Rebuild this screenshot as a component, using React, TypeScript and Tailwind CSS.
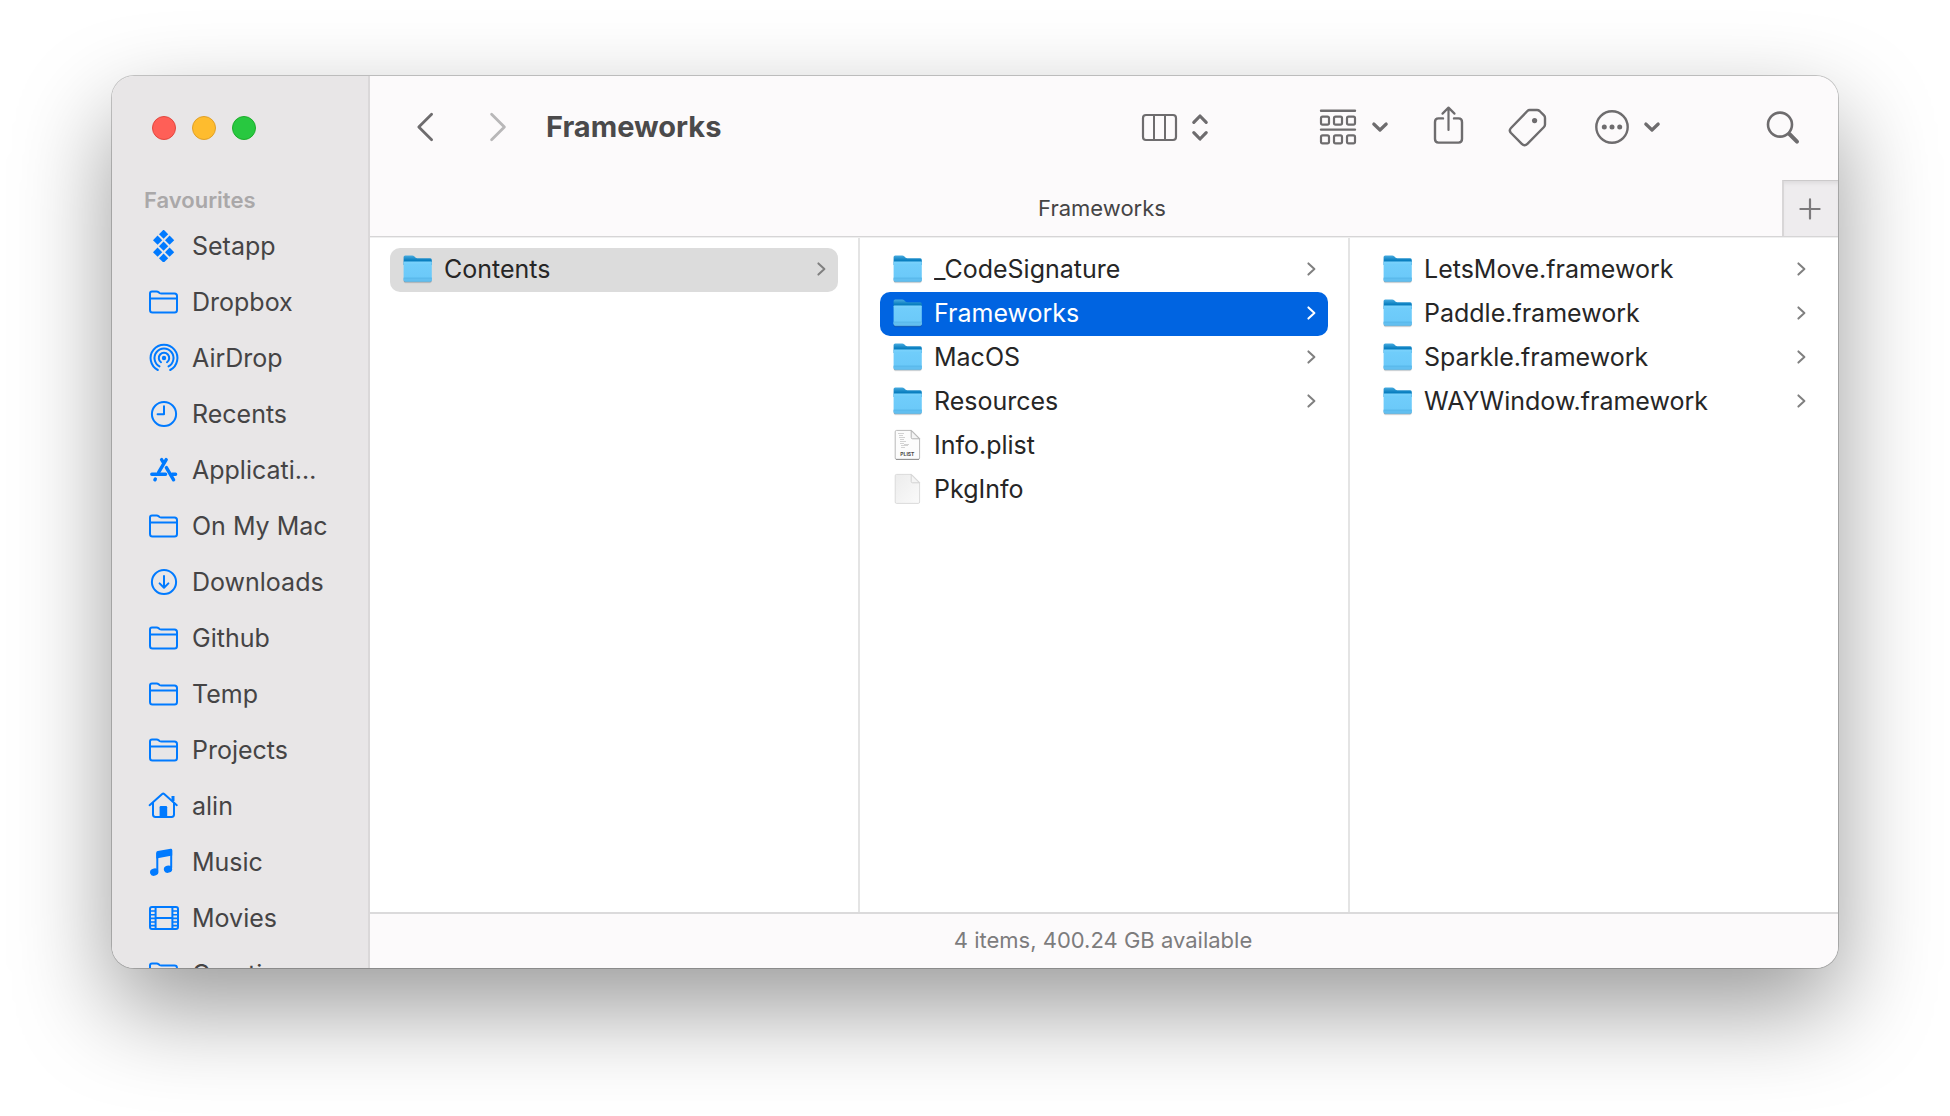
import React, { useState } from "react";
import clsx from "clsx";

type Entry = {
  name: string;
  kind: "folder" | "plist" | "file";
};

const contents: Entry[] = [{ name: "Contents", kind: "folder" }];

const bundle: Entry[] = [
  { name: "_CodeSignature", kind: "folder" },
  { name: "Frameworks", kind: "folder" },
  { name: "MacOS", kind: "folder" },
  { name: "Resources", kind: "folder" },
  { name: "Info.plist", kind: "plist" },
  { name: "PkgInfo", kind: "file" },
];

const frameworks: Entry[] = [
  { name: "LetsMove.framework", kind: "folder" },
  { name: "Paddle.framework", kind: "folder" },
  { name: "Sparkle.framework", kind: "folder" },
  { name: "WAYWindow.framework", kind: "folder" },
];

/* Sidebar icons, all on a 32x32 box */

const SideIcon = ({ children }: { children: React.ReactNode }) => (
  <svg
    viewBox="0 0 32 32"
    className="size-8 shrink-0 text-[#007aff]"
    fill="none"
    stroke="currentColor"
    strokeWidth="2"
    strokeLinecap="round"
    strokeLinejoin="round"
    aria-hidden="true"
  >
    {children}
  </svg>
);

const SetappIcon = () => (
  <SideIcon>
    <g fill="currentColor" stroke="none">
      {[
        [15.6, 4.2],
        [9.6, 10.2],
        [21.6, 10.2],
        [15.6, 16.2],
        [9.6, 22.2],
        [21.6, 22.2],
        [15.6, 28.2],
      ].map(([x, y]) => (
        <path
          key={`${x}-${y}`}
          d={`M${x} ${y - 4.6}l4.6 4.6l-4.6 4.6l-4.6 -4.6z`}
        />
      ))}
    </g>
  </SideIcon>
);

const FolderOutline = () => (
  <SideIcon>
    <path d="M2 9V7.5Q2 5.5 4 5.5H8.6Q9.8 5.5 10.7 6.3L11.5 7Q12.3 7.6 13.5 7.6H26.5Q29 7.6 29 10.1V24Q29 26.5 26.5 26.5H4.5Q2 26.5 2 24ZM2 12.4H29" />
  </SideIcon>
);

const AirDropIcon = () => (
  <SideIcon>
    <circle cx="16" cy="16" r="2.2" fill="currentColor" stroke="none" />
    <path d="M13 20.2A5.2 5.2 0 1 1 19 20.2" />
    <path d="M11.5 24.4A9.5 9.5 0 1 1 20.5 24.4" />
    <path d="M9.8 28A13.4 13.4 0 1 1 22.2 28" />
  </SideIcon>
);

const RecentsIcon = () => (
  <SideIcon>
    <circle cx="16" cy="16" r="12.1" />
    <path d="M16 8.2V16.3H9.6" />
  </SideIcon>
);

const ApplicationsIcon = () => (
  <SideIcon>
    <g strokeWidth="3.4">
      <path d="M18.2 5.6L10.6 18.4M13.6 5.6L15.8 9.2" />
      <path d="M3.8 20.2H17.6M24.2 20.2H27.6" />
      <path d="M18.4 13.6L25.6 25.8M7.3 25.1L6.9 25.8" />
    </g>
  </SideIcon>
);

const DownloadsIcon = () => (
  <SideIcon>
    <circle cx="16" cy="16" r="12.1" />
    <path d="M16 10V21.6M11.6 17.4L16 21.8L20.4 17.4" />
  </SideIcon>
);

const HomeIcon = () => (
  <SideIcon>
    <path d="M1.6 15.2L14.2 4Q15.2 3.2 16.2 4L28.8 15.2" />
    <path d="M5 13V24.5Q5 26.9 7.4 26.9H23.6Q26 26.9 26 24.5V13" />
    <path d="M25 11V6" strokeWidth="3" strokeLinecap="butt" />
    <path
      d="M11.6 27V17.2Q11.6 16 12.8 16H18Q19.2 16 19.2 17.2V27Z"
      fill="currentColor"
      stroke="none"
    />
  </SideIcon>
);

const MusicIcon = () => (
  <SideIcon>
    <path d="M9.3 25V7.5M23.2 21.6V4.5" />
    <path
      d="M8.3 6.8Q8.3 5.4 9.7 5.1L22.6 2.8Q24.2 2.6 24.2 4V9.6L8.3 12.6Z"
      fill="currentColor"
      stroke="none"
    />
    <g fill="currentColor" stroke="none">
      <ellipse cx="6.2" cy="26.1" rx="4.2" ry="3.6" transform="rotate(-18 6.2 26.1)" />
      <ellipse cx="20" cy="23.2" rx="4.2" ry="3.6" transform="rotate(-18 20 23.2)" />
    </g>
  </SideIcon>
);

const MoviesIcon = () => (
  <SideIcon>
    <rect x="2" y="5" width="28" height="22" rx="2" />
    <path d="M7.6 5V27M24.4 5V27M7.6 16H24.4" />
    <path
      d="M2 9H7M2 12.8H7M2 16.4H7M2 20H7M2 23.6H7M25 9H30M25 12.8H30M25 16.4H30M25 20H30M25 23.6H30"
      strokeLinecap="butt"
      strokeWidth="1.6"
    />
  </SideIcon>
);

const favourites = [
  { name: "Setapp", Icon: SetappIcon },
  { name: "Dropbox", Icon: FolderOutline },
  { name: "AirDrop", Icon: AirDropIcon },
  { name: "Recents", Icon: RecentsIcon },
  { name: "Applications", Icon: ApplicationsIcon },
  { name: "On My Mac", Icon: FolderOutline },
  { name: "Downloads", Icon: DownloadsIcon },
  { name: "Github", Icon: FolderOutline },
  { name: "Temp", Icon: FolderOutline },
  { name: "Projects", Icon: FolderOutline },
  { name: "alin", Icon: HomeIcon },
  { name: "Music", Icon: MusicIcon },
  { name: "Movies", Icon: MoviesIcon },
  { name: "Creative", Icon: FolderOutline },
];

/* File icons */

const FolderIcon = () => (
  <svg viewBox="0 0 30 32" className="h-8 w-[30px] shrink-0" aria-hidden="true">
    <defs>
      <linearGradient id="folderBack" x1="0" y1="0" x2="0" y2="1">
        <stop offset="0" stopColor="#48ace0" />
        <stop offset="0.5" stopColor="#0a7fc0" />
      </linearGradient>
      <linearGradient id="folderFront" x1="0" y1="0" x2="0" y2="1">
        <stop offset="0" stopColor="#7dd3fc" />
        <stop offset="0.15" stopColor="#70cdfb" />
        <stop offset="1" stopColor="#6ac8f8" />
      </linearGradient>
    </defs>
    <rect x="1.6" y="26" width="28" height="4.2" rx="1.6" fill="#000" opacity="0.1" />
    <rect x="1.8" y="25" width="27.8" height="4.2" rx="1.4" fill="#5b7f93" opacity="0.7" />
    <path
      d="M1.6 4.1Q1.6 2.5 3.2 2.5H10.2Q11.4 2.5 12.2 3.3L13.4 4.5Q14.2 5.3 15.4 5.3H28.2Q29.8 5.3 29.8 6.9V12H1.6Z"
      fill="url(#folderBack)"
    />
    <path
      d="M1.6 9.3Q1.6 8.4 2.5 8.4H28.9Q29.8 8.4 29.8 9.3V26.8Q29.8 28.4 28.2 28.4H3.2Q1.6 28.4 1.6 26.8Z"
      fill="url(#folderFront)"
    />
    <path d="M1.6 25H29.8V26.8Q29.8 28.4 28.2 28.4H3.2Q1.6 28.4 1.6 26.8Z" fill="#62bff0" />
    <path d="M1.6 25H29.8" stroke="#4fb0e2" strokeWidth="0.6" />
  </svg>
);

const DocumentIcon = ({ plist = false }: { plist?: boolean }) => (
  <svg viewBox="0 0 30 32" className="h-8 w-[30px] shrink-0" aria-hidden="true">
    <defs>
      <linearGradient id="page" x1="0" y1="0" x2="1" y2="1">
        <stop offset="0" stopColor="#ececec" />
        <stop offset="1" stopColor="#fafafa" />
      </linearGradient>
    </defs>
    <path
      d="M4.6 1.4H19.6L27.6 9.4V29Q27.6 30.4 26.2 30.4H4.6Q3.2 30.4 3.2 29V2.8Q3.2 1.4 4.6 1.4Z"
      fill={plist ? "#fcfcfc" : "url(#page)"}
      stroke={plist ? "#b9b9b9" : "#dadada"}
      strokeWidth="1"
    />
    {plist && <path d="M4 30.4H27" stroke="#8f8f8f" strokeWidth="1" />}
    <path
      d="M19.2 1.6V8.4Q19.2 9.8 20.6 9.8H27.4Z"
      fill="#f4f4f4"
      stroke={plist ? "#aaaaaa" : "#cfcfcf"}
      strokeWidth="0.9"
    />
    {plist && (
      <>
        <path
          d="M6 4.5H12M7 6.5H11M7 8.5H13M8 10.5H12M8 12.5H14M8 14.5H12M9 16.5H16M9 18.5H13M12 15.5H17"
          stroke="#d2d2d2"
          strokeWidth="1"
        />
        <text
          x="15.4"
          y="27.4"
          textAnchor="middle"
          fontFamily="Inter, sans-serif"
          fontSize="5"
          fontWeight="700"
          fill="#4a4a4a"
        >
          PLIST
        </text>
      </>
    )}
  </svg>
);

/* Toolbar icons, drawn at their own size */

const ToolIcon = ({
  w,
  h,
  className,
  children,
}: {
  w: number;
  h: number;
  className?: string;
  children: React.ReactNode;
}) => (
  <svg
    width={w}
    height={h}
    viewBox={`0 0 ${w} ${h}`}
    className={clsx("shrink-0 overflow-visible", className)}
    fill="none"
    stroke="currentColor"
    strokeWidth="2"
    strokeLinecap="round"
    strokeLinejoin="round"
    aria-hidden="true"
  >
    {children}
  </svg>
);

const ChevronDown = () => (
  <ToolIcon w={16} h={10}>
    <path d="M1.8 2L8 8L14.2 2" strokeWidth="3.2" />
  </ToolIcon>
);

const Toolbar = () => (
  <div className="flex h-[104px] shrink-0 items-center pr-[39px] pb-0.5 pl-[47px] text-[#6e6c6e]">
    <button type="button" aria-label="Back">
      <ToolIcon w={16} h={28}>
        <path d="M14.6 1.2L1.8 14L14.6 26.8" strokeWidth="2.8" />
      </ToolIcon>
    </button>
    <button type="button" aria-label="Forward" className="ml-[57px] text-[#b8b7b8]">
      <ToolIcon w={16} h={28}>
        <path d="M1.6 1.2L14.4 14L1.6 26.8" strokeWidth="2.8" />
      </ToolIcon>
    </button>
    <h1 className="ml-10 flex-1 text-[29px] leading-9 font-bold text-[#4b4a4b]">
      Frameworks
    </h1>

    <button type="button" aria-label="View" className="mr-28 flex items-center gap-[15px]">
      <ToolIcon w={35} h={27}>
        <rect x="1" y="1" width="33" height="25" rx="3" strokeWidth="2.2" />
        <path d="M12 1V26M23 1V26" />
      </ToolIcon>
      <ToolIcon w={16} h={27}>
        <path d="M1.8 8.4L8 2L14.2 8.4M1.8 18.6L8 25L14.2 18.6" strokeWidth="3.2" />
      </ToolIcon>
    </button>

    <button type="button" aria-label="Group" className="mr-[46px] flex items-center gap-4">
      <ToolIcon w={36} h={36}>
        <path d="M1 1.8H35M1 20.6H35" strokeWidth="2.4" />
        {[7.6, 26.4].map((y) =>
          [1, 14, 27].map((x) => (
            <rect key={`${x}-${y}`} x={x} y={y} width="8" height="8" rx="1.6" strokeWidth="2.2" />
          ))
        )}
      </ToolIcon>
      <ChevronDown />
    </button>

    <button type="button" aria-label="Share" className="mr-[46px] -mt-1">
      <ToolIcon w={29} h={38}>
        <path d="M9 12.4H4.5Q1 12.4 1 15.9V33Q1 36.6 4.5 36.6H24.5Q28 36.6 28 33V15.9Q28 12.4 24.5 12.4H20" strokeWidth="2.4" />
        <path d="M14.5 24V2M8.5 7.6L14.5 1.6L20.5 7.6" strokeWidth="2.2" />
      </ToolIcon>
    </button>

    <button type="button" aria-label="Tags" className="mr-[49px]">
      <ToolIcon w={37} h={37}>
        <path
          d="M20.6 1H28Q29.5 1 30.6 2L35 6.4Q36 7.5 36 9V15.6Q36 17 35 18L18.4 34.8Q15.6 37.6 12.8 34.8L2 24Q-0.4 21.4 2 19L18.4 2Q19.4 1 20.6 1Z"
          strokeWidth="2.4"
        />
        <circle cx="25.6" cy="11.6" r="2.6" fill="currentColor" stroke="none" />
      </ToolIcon>
    </button>

    <button type="button" aria-label="More" className="mr-[107px] flex items-center gap-[15px]">
      <ToolIcon w={34} h={34}>
        <circle cx="17" cy="17" r="15.7" strokeWidth="2.4" />
        <g fill="currentColor" stroke="none">
          <circle cx="9.3" cy="17" r="2.5" />
          <circle cx="17" cy="17" r="2.5" />
          <circle cx="24.7" cy="17" r="2.5" />
        </g>
      </ToolIcon>
      <ChevronDown />
    </button>

    <button type="button" aria-label="Search">
      <ToolIcon w={32} h={33}>
        <circle cx="13" cy="13.6" r="12" strokeWidth="2.6" />
        <path d="M22.4 23L30 30.6" strokeWidth="4" />
      </ToolIcon>
    </button>
  </div>
);

const Sidebar = () => (
  <aside className="flex w-[258px] shrink-0 flex-col overflow-hidden border-r-2 border-[#dad8d9] bg-[#e8e6e7]">
    <div className="flex h-[104px] shrink-0 items-center gap-4 pl-10">
      <button
        type="button"
        aria-label="Close"
        className="size-6 rounded-full border border-[#e2483f] bg-[#ff5f57]"
      />
      <button
        type="button"
        aria-label="Minimise"
        className="size-6 rounded-full border border-[#e0a028] bg-[#febc2e]"
      />
      <button
        type="button"
        aria-label="Zoom"
        className="size-6 rounded-full border border-[#1dad2b] bg-[#28c840]"
      />
    </div>
    <h2 className="h-[39px] shrink-0 pl-8 text-[22px] leading-10 font-semibold text-[#aaa8a9]">
      Favourites
    </h2>
    <nav>
      <ul>
        {favourites.map(({ name, Icon }) => (
          <li key={name}>
            <a href="#" className="flex h-14 items-center gap-3 pr-10 pb-0.5 pl-9">
              <Icon />
              <span className="truncate text-[25px] leading-8 text-[#454445]">
                {name}
              </span>
            </a>
          </li>
        ))}
      </ul>
    </nav>
  </aside>
);

const Column = ({
  entries,
  selected,
  focused = false,
  onSelect,
  className,
}: {
  entries: Entry[];
  selected?: string;
  focused?: boolean;
  onSelect?: (name: string) => void;
  className?: string;
}) => (
  <ul className={clsx("min-w-0 px-5 pt-[10px]", className)}>
    {entries.map(({ name, kind }) => {
      const active = name === selected;

      return (
        <li key={name}>
          <button
            type="button"
            onClick={() => onSelect?.(name)}
            className={clsx(
              "flex h-11 w-full items-center gap-3 rounded-[10px] px-3 pb-0.5 text-left",
              active && focused && "bg-[#0064e1] text-white",
              active && !focused && "bg-[#dcdcdc] text-[#262626]",
              !active && "text-[#262626]"
            )}
          >
            {kind === "folder" ? <FolderIcon /> : <DocumentIcon plist={kind === "plist"} />}
            <span className="flex-1 truncate text-[25px] leading-8">{name}</span>
            {kind === "folder" && (
              <ToolIcon
                w={9}
                h={14}
                className={active && focused ? "text-white" : "text-[#808080]"}
              >
                <path d="M1.4 1.4L7.4 7L1.4 12.6" />
              </ToolIcon>
            )}
          </button>
        </li>
      );
    })}
  </ul>
);

const App = () => {
  const [selected, setSelected] = useState("Frameworks");

  return (
    <div className="h-screen bg-white px-28 pt-[76px] pb-[148px] font-['Inter',sans-serif]">
      <div className="flex h-full overflow-hidden rounded-[22px] bg-white shadow-[0_0_0_1px_rgba(0,0,0,0.2),0_40px_96px_rgba(0,0,0,0.4)]">
        <Sidebar />

        <main className="flex min-w-0 flex-1 flex-col">
          <header className="border-b border-[#d6d5d6] bg-[#fcfafb]">
            <Toolbar />
            <div className="flex h-14 pl-[52px]">
              <div className="flex flex-1 items-center justify-center text-[22px] leading-7 text-[#454445]">
                Frameworks
              </div>
              <button
                type="button"
                aria-label="New tab"
                className="flex w-14 items-center justify-center border-t border-l-2 border-t-[#cccacb] border-l-[#d8d6d7] bg-[#eeecee] pr-0.5 text-[#7c7a7c] shadow-[inset_0_4px_4px_-2px_rgba(0,0,0,0.08)]"
              >
                <ToolIcon w={22} h={22}>
                  <path d="M11 1.4V20.6M1.4 11H20.6" strokeWidth="2.2" />
                </ToolIcon>
              </button>
            </div>
          </header>

          <div className="flex min-h-0 flex-1 border-t border-[#efefef]">
            <Column
              entries={contents}
              selected="Contents"
              className="w-[490px] border-r-2 border-[#e4e4e4]"
            />
            <Column
              entries={bundle}
              selected={selected}
              focused
              onSelect={setSelected}
              className="w-[490px] border-r-2 border-[#e4e4e4]"
            />
            <Column entries={frameworks} className="flex-1" />
          </div>

          <footer className="flex h-14 shrink-0 items-center justify-center border-t-2 border-[#dbdadb] bg-[#fcfafb] pr-0.5 pb-0.5 text-[22px] leading-7 text-[#7d7c7d]">
            4 items, 400.24 GB available
          </footer>
        </main>
      </div>
    </div>
  );
};

export default App;
